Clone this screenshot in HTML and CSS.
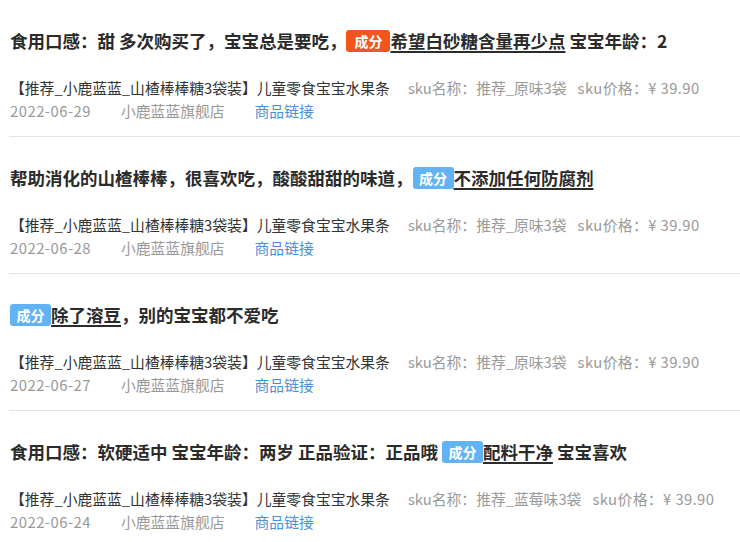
FILE: index.html
```html
<!DOCTYPE html>
<html lang="zh-CN">
<head>
<meta charset="utf-8">
<title>评价列表</title>
<link rel="stylesheet" href="styles.css">
</head>
<body>
<ul class="list">
  <li class="item">
    <div class="title">食用口感：甜 多次购买了，宝宝总是要吃，<span class="tag tag-orange">成分</span><span class="hl">希望白砂糖含量再少点</span> 宝宝年龄：2</div>
    <div class="info"><span class="prod">【推荐_小鹿蓝蓝_山楂棒棒糖3袋装】儿童零食宝宝水果条</span><span class="sku">sku名称：推荐_原味3袋</span><span class="price">sku价格：¥ 39.90</span></div>
    <div class="meta"><span class="date">2022-06-29</span><span class="shop">小鹿蓝蓝旗舰店</span><a class="link" href="#">商品链接</a></div>
  </li>
  <li class="item">
    <div class="title">帮助消化的山楂棒棒，很喜欢吃，酸酸甜甜的味道，<span class="tag tag-blue">成分</span><span class="hl">不添加任何防腐剂</span></div>
    <div class="info"><span class="prod">【推荐_小鹿蓝蓝_山楂棒棒糖3袋装】儿童零食宝宝水果条</span><span class="sku">sku名称：推荐_原味3袋</span><span class="price">sku价格：¥ 39.90</span></div>
    <div class="meta"><span class="date">2022-06-28</span><span class="shop">小鹿蓝蓝旗舰店</span><a class="link" href="#">商品链接</a></div>
  </li>
  <li class="item">
    <div class="title"><span class="tag tag-blue">成分</span><span class="hl">除了溶豆</span>，别的宝宝都不爱吃</div>
    <div class="info"><span class="prod">【推荐_小鹿蓝蓝_山楂棒棒糖3袋装】儿童零食宝宝水果条</span><span class="sku">sku名称：推荐_原味3袋</span><span class="price">sku价格：¥ 39.90</span></div>
    <div class="meta"><span class="date">2022-06-27</span><span class="shop">小鹿蓝蓝旗舰店</span><a class="link" href="#">商品链接</a></div>
  </li>
  <li class="item">
    <div class="title">食用口感：软硬适中 宝宝年龄：两岁 正品验证：正品哦 <span class="tag tag-blue">成分</span><span class="hl">配料干净</span> 宝宝喜欢</div>
    <div class="info"><span class="prod">【推荐_小鹿蓝蓝_山楂棒棒糖3袋装】儿童零食宝宝水果条</span><span class="sku">sku名称：推荐_蓝莓味3袋</span><span class="price">sku价格：¥ 39.90</span></div>
    <div class="meta"><span class="date">2022-06-24</span><span class="shop">小鹿蓝蓝旗舰店</span><a class="link" href="#">商品链接</a></div>
  </li>
</ul>
</body>
</html>
```

FILE: styles.css
```css
html, body {
  margin: 0;
  padding: 0;
  background: #ffffff;
}

body {
  font-family: "Noto Sans CJK SC", "Noto Sans", sans-serif;
  color: #333333;
}

.list {
  list-style: none;
  margin: 0 0 0 9px;
  padding: 0;
}

.item {
  padding: 28px 0 14px 1px;
  border-bottom: 1px solid #e3e3e3;
}

.title {
  font-size: 17.5px;
  font-weight: 700;
  line-height: 26px;
  color: #2b2b2b;
  white-space: nowrap;
}

.tag {
  display: inline-block;
  height: 22px;
  line-height: 22px;
  border-radius: 3px;
  color: #ffffff;
  font-size: 14px;
  font-weight: 700;
  vertical-align: 1px;
}

.tag-orange {
  background: #f2561d;
  padding: 0 8px;
}

.tag-blue {
  background: #62b3f4;
  padding: 0 6.5px;
}

.hl {
  text-decoration: underline;
  text-decoration-thickness: 1.5px;
  text-underline-offset: 3px;
}

.info,
.meta {
  font-size: 14.8px;
  line-height: 23px;
  white-space: nowrap;
}

.info {
  margin-top: 22px;
}

.prod {
  color: #333333;
}

.sku {
  color: #999999;
  margin-left: 18px;
}

.price {
  color: #999999;
  margin-left: 11px;
  letter-spacing: 0.4px;
}

.date {
  letter-spacing: 0.5px;
}

.date,
.shop {
  color: #999999;
  margin-right: 30px;
}

.link {
  color: #4a90d9;
  text-decoration: none;
}
```
